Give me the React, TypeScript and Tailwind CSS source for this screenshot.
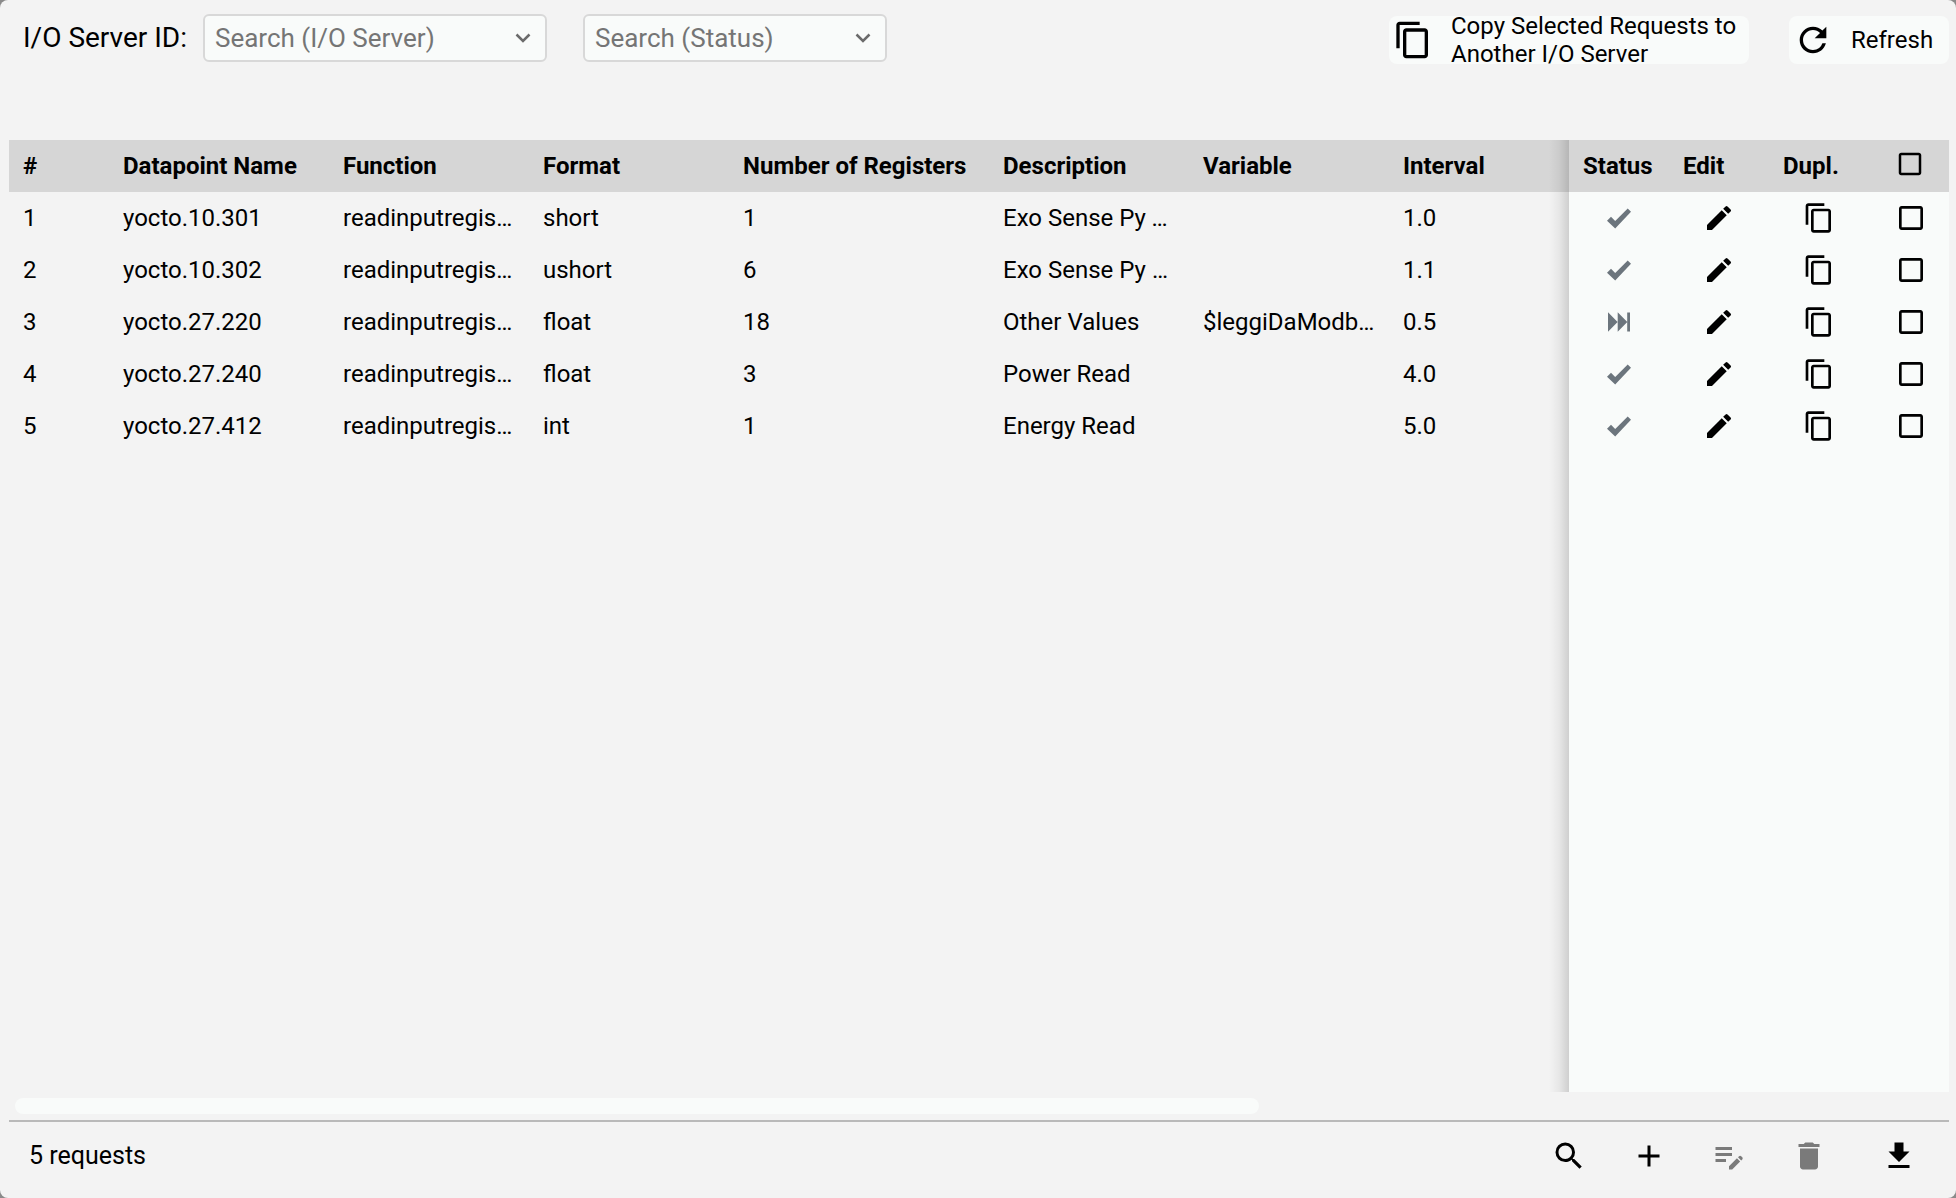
import { useState } from "react";
import {
  MdAdd,
  MdCheckBox,
  MdCheckBoxOutlineBlank,
  MdContentCopy,
  MdDelete,
  MdEdit,
  MdEditNote,
  MdFileDownload,
  MdRefresh,
  MdSearch,
} from "react-icons/md";

interface RequestRow {
  id: number;
  name: string;
  fn: string;
  format: string;
  registers: number;
  description: string;
  variable: string;
  interval: string;
  status: "ok" | "skipped";
}

const rows: RequestRow[] = [
  {
    id: 1,
    name: "yocto.10.301",
    fn: "readinputregisters",
    format: "short",
    registers: 1,
    description: "Exo Sense Py Temperature",
    variable: "",
    interval: "1.0",
    status: "ok",
  },
  {
    id: 2,
    name: "yocto.10.302",
    fn: "readinputregisters",
    format: "ushort",
    registers: 6,
    description: "Exo Sense Py Humidity",
    variable: "",
    interval: "1.1",
    status: "ok",
  },
  {
    id: 3,
    name: "yocto.27.220",
    fn: "readinputregisters",
    format: "float",
    registers: 18,
    description: "Other Values",
    variable: "$leggiDaModbus",
    interval: "0.5",
    status: "skipped",
  },
  {
    id: 4,
    name: "yocto.27.240",
    fn: "readinputregisters",
    format: "float",
    registers: 3,
    description: "Power Read",
    variable: "",
    interval: "4.0",
    status: "ok",
  },
  {
    id: 5,
    name: "yocto.27.412",
    fn: "readinputregisters",
    format: "int",
    registers: 1,
    description: "Energy Read",
    variable: "",
    interval: "5.0",
    status: "ok",
  },
];

const columns = [
  { label: "#", width: "w-[100px]" },
  { label: "Datapoint Name", width: "w-[220px]" },
  { label: "Function", width: "w-[200px]" },
  { label: "Format", width: "w-[200px]" },
  { label: "Number of Registers", width: "w-[260px]" },
  { label: "Description", width: "w-[200px]" },
  { label: "Variable", width: "w-[200px]" },
  { label: "Interval", width: "w-auto" },
];

function StatusIcon({ status }: { status: RequestRow["status"] }) {
  if (status == "skipped") {
    return (
      <svg viewBox="0 0 24 24" className="size-6 fill-[#6c757d]" role="img" aria-label="Skipped">
        <path d="M1 2.200L10.600 12 1 21.800zM10.700 2.200L20.300 12 10.700 21.800zM20.200 2.500H23v19h-2.800z" />
      </svg>
    );
  }
  return (
    <svg viewBox="0 0 24 24" className="size-6 fill-[#6c757d]" role="img" aria-label="Active">
      <path d="M0 14.800L4 10.800 8.200 15 20.700 2.500 24 5.800 8.200 22.600z" />
    </svg>
  );
}

interface SelectProps {
  id: string;
  placeholder: string;
  className: string;
}

function Select({ id, placeholder, className }: SelectProps) {
  return (
    <div className={`relative ${className}`}>
      <select
        id={id}
        aria-label={placeholder}
        className="w-full h-12 pl-[10px] pr-12 appearance-none rounded-md border-2 border-[#d8d8d8] bg-[#f9fbfa] text-[26px] leading-8 text-[#757575]"
      >
        <option>{placeholder}</option>
      </select>
      <svg
        viewBox="0 0 16 10"
        className="absolute right-4 top-[19px] w-4 h-[10px] fill-none stroke-[#6b6b6b] stroke-[2.5] pointer-events-none"
      >
        <path d="M1.500 1.500L8 8l6.500-6.500" />
      </svg>
    </div>
  );
}

interface CheckProps {
  label: string;
  checked: boolean;
  onChange: () => void;
  size: string;
}

function Check({ label, checked, onChange, size }: CheckProps) {
  return (
    <label className="grid w-fit cursor-pointer">
      <input
        type="checkbox"
        aria-label={label}
        checked={checked}
        onChange={onChange}
        className={`col-start-1 row-start-1 appearance-none ${size}`}
      />
      <span className="col-start-1 row-start-1 pointer-events-none">
        {checked ? <MdCheckBox className={size} /> : <MdCheckBoxOutlineBlank className={size} />}
      </span>
    </label>
  );
}

export default function App() {
  const [selected, setSelected] = useState<number[]>([]);
  const allSelected = selected.length == rows.length;

  const toggle = (id: number) => {
    setSelected(selected.includes(id) ? selected.filter((s) => s != id) : [...selected, id]);
  };

  return (
    <div className="min-h-screen bg-[#8a8a8a] font-[Roboto,sans-serif] text-black">
      <div className="flex flex-col min-h-screen pl-[9px] pr-[7px] rounded-lg bg-[#f3f3f3]">
        <header className="flex items-start h-[140px] pl-[14px] pt-[14px]">
          <label htmlFor="server" className="text-[28px] leading-12 w-[180px] shrink-0">
            I/O Server ID:
          </label>
          <Select id="server" placeholder="Search (I/O Server)" className="w-[344px]" />
          <Select id="status" placeholder="Search (Status)" className="w-[304px] ml-9" />
          <div className="flex gap-10 ml-auto pt-[2px]">
            <button className="flex items-center gap-[18px] w-[360px] h-12 pl-1 rounded-lg bg-[#f9fbfa] text-left text-2xl leading-7">
              <MdContentCopy className="size-10 shrink-0" />
              <span>Copy Selected Requests to Another I/O Server</span>
            </button>
            <button className="flex items-center gap-[18px] w-[160px] h-12 pl-1 rounded-lg bg-[#f9fbfa] text-2xl leading-7">
              <MdRefresh className="size-10 shrink-0" />
              Refresh
            </button>
          </div>
        </header>

        <main className="flex grow">
          <div className="grow min-w-0">
            <table className="w-full table-fixed text-2xl text-left">
              <thead>
                <tr className="h-[52px] bg-[#d6d6d6]">
                  {columns.map((c) => (
                    <th key={c.label} className={`${c.width} px-[14px] font-bold whitespace-nowrap`}>
                      {c.label}
                    </th>
                  ))}
                </tr>
              </thead>
              <tbody>
                {rows.map((r) => (
                  <tr key={r.id} className="h-[52px]">
                    <td className="px-[14px]">{r.id}</td>
                    <td className="px-[14px] truncate">{r.name}</td>
                    <td className="px-[14px] truncate">{r.fn}</td>
                    <td className="px-[14px] truncate">{r.format}</td>
                    <td className="px-[14px]">{r.registers}</td>
                    <td className="px-[14px] truncate">{r.description}</td>
                    <td className="px-[14px] truncate">{r.variable}</td>
                    <td className="px-[14px]">{r.interval}</td>
                  </tr>
                ))}
              </tbody>
            </table>
          </div>

          {/* columns pinned to the right */}
          <div className="relative w-[380px] shrink-0 bg-[#f9fbfa]">
            <div className="absolute right-full inset-y-0 w-5 bg-linear-to-l from-black/15 via-black/5 to-transparent" />
            <table className="w-full table-fixed text-2xl text-left">
              <thead>
                <tr className="h-[52px] bg-[#d6d6d6]">
                  <th className="w-[100px] pl-[14px] font-bold">Status</th>
                  <th className="w-[100px] pl-[14px] font-bold">Edit</th>
                  <th className="w-[100px] pl-[14px] font-bold">Dupl.</th>
                  <th className="w-20 pl-[26px] pb-1">
                    <Check
                      label="Select all"
                      size="size-[30px]"
                      checked={allSelected}
                      onChange={() => setSelected(allSelected ? [] : rows.map((r) => r.id))}
                    />
                  </th>
                </tr>
              </thead>
              <tbody>
                {rows.map((r) => (
                  <tr key={r.id} className="h-[52px]">
                    <td>
                      <div className="flex justify-center">
                        <StatusIcon status={r.status} />
                      </div>
                    </td>
                    <td>
                      <button className="flex mx-auto" aria-label={`Edit ${r.name}`}>
                        <MdEdit className="size-8" />
                      </button>
                    </td>
                    <td>
                      <button className="flex mx-auto" aria-label={`Duplicate ${r.name}`}>
                        <MdContentCopy className="size-8" />
                      </button>
                    </td>
                    <td className="pl-[26px]">
                      <Check
                        label={`Select ${r.name}`}
                        size="size-8"
                        checked={selected.includes(r.id)}
                        onChange={() => toggle(r.id)}
                      />
                    </td>
                  </tr>
                ))}
              </tbody>
            </table>
          </div>
        </main>

        <div className="h-7 px-[6px] py-[6px]">
          <div className="w-[64.5%] h-4 rounded-full bg-[#f9fbfa]" />
        </div>

        <footer className="flex items-center justify-between h-[78px] pl-5 pr-8 pb-2 border-t-2 border-[#b9b9b9]">
          <span className="text-[25px]">{rows.length} requests</span>
          <div className="flex gap-11">
            <button aria-label="Search">
              <MdSearch className="size-9" />
            </button>
            <button aria-label="Add">
              <MdAdd className="size-9" />
            </button>
            <button aria-label="Edit selected" className="text-[#7a7a7a]" disabled>
              <MdEditNote className="size-9" />
            </button>
            <button aria-label="Delete selected" className="text-[#7a7a7a]" disabled>
              <MdDelete className="size-9" />
            </button>
            <button aria-label="Download" className="ml-[10px]">
              <MdFileDownload className="size-9" />
            </button>
          </div>
        </footer>
      </div>
    </div>
  );
}
